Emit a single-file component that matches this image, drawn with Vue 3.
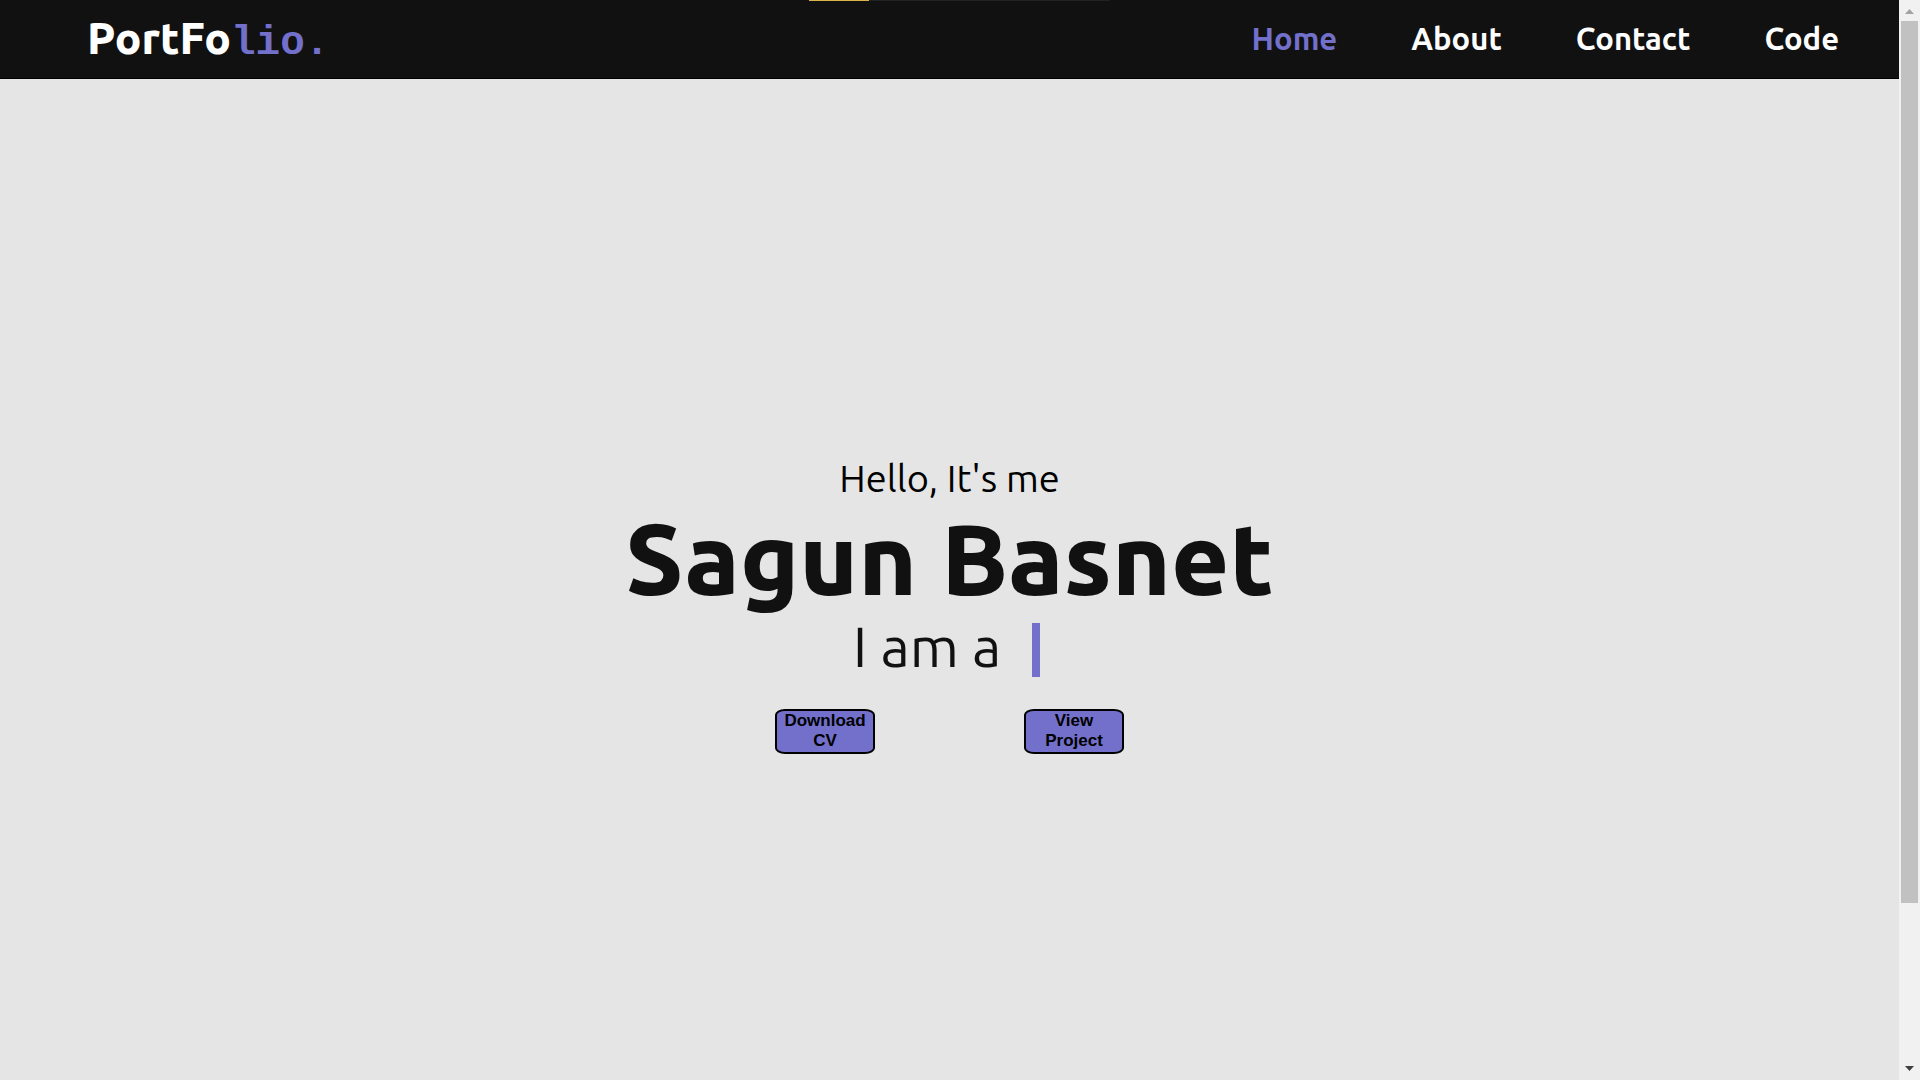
<script setup>
const links = [
  { label: 'Home', href: '#home', active: true },
  { label: 'About', href: '#about' },
  { label: 'Contact', href: '#contact' },
  { label: 'Code', href: '#code' },
]
const actions = ['Download CV', 'View Project']
</script>

<template>
  <div class="window">
    <div class="page">
      <header class="header">
        <a class="logo" href="#home">PortFo<span class="logo-accent">lio.</span></a>
        <nav class="nav">
          <a
            v-for="link in links"
            :key="link.label"
            :href="link.href"
            :class="['nav-link', { active: link.active }]"
          >{{ link.label }}</a>
        </nav>
        <div class="progress"><div class="progress-value"></div></div>
      </header>
      <main id="home" class="hero">
        <p class="greeting">Hello, It's me</p>
        <h1 class="name">Sagun Basnet</h1>
        <h2 class="role">I am a<span class="caret"></span></h2>
        <div class="actions">
          <button v-for="action in actions" :key="action" class="action" type="button">{{ action }}</button>
        </div>
      </main>
    </div>
    <div class="scrollbar" aria-hidden="true">
      <svg class="arrow" viewBox="0 0 21 21"><path d="M6 14L10.500 9L15 14Z" fill="#a3a3a3" /></svg>
      <div class="track"><div class="thumb"></div></div>
      <svg class="arrow" viewBox="0 0 21 21"><path d="M6 7L10.500 12L15 7Z" fill="#404040" /></svg>
    </div>
  </div>
</template>

<style>
body {
  margin: 0;
  background: #e5e5e5;
}
</style>

<style scoped>
.window {
  display: flex;
  min-height: 100vh;
  font-family: Ubuntu, "Noto Sans", sans-serif;
}
.page {
  flex: 1;
  display: flex;
  flex-direction: column;
  background: #e5e5e5;
}
.header {
  position: relative;
  display: flex;
  align-items: center;
  justify-content: space-between;
  box-sizing: border-box;
  height: 79px;
  padding: 0 60px 0 87px;
  border-bottom: 1px solid #000;
  background: #111;
}
.logo {
  padding-top: 2px;
  color: #fff;
  font-size: 44px;
  font-weight: 800;
  line-height: 76px;
  text-decoration: none;
}
.logo-accent {
  color: #7270cb;
  font-family: Consolas, "Liberation Mono", monospace;
  font-size: 41px;
  font-weight: 700;
}
.nav {
  display: flex;
  gap: 74px;
}
.nav-link {
  color: #fff;
  font-size: 31px;
  font-weight: 600;
  line-height: 76px;
  text-decoration: none;
}
.nav-link.active {
  color: #7270cb;
}
.progress {
  position: absolute;
  top: 0;
  left: 809px;
  width: 301px;
  height: 1px;
  background: #222;
}
.progress-value {
  width: 20%;
  height: 1px;
  background: #d9b24a;
}
.hero {
  flex: 1;
  display: flex;
  flex-direction: column;
  align-items: center;
  justify-content: center;
  padding-top: 49px;
  color: #111;
}
.greeting {
  margin: 0;
  color: #000;
  font-size: 38px;
  line-height: 48px;
}
.name {
  margin: 8px 0;
  font-size: 100px;
  font-weight: 800;
  line-height: 96px;
}
.role {
  display: flex;
  align-items: center;
  gap: 31px;
  margin: 0;
  font-size: 57px;
  font-weight: 400;
  line-height: 64px;
}
.caret {
  width: 8px;
  height: 54px;
  margin: 8px 6px 0 0;
  background: #7270cb;
}
.actions {
  display: flex;
  gap: 149px;
  margin-top: 31px;
}
.action {
  width: 100px;
  height: 45px;
  padding: 0 0 2px;
  border: 2px solid #000;
  border-radius: 10px / 6px;
  background: #7270cb;
  color: #000;
  font-family: "Liberation Sans", Arial, sans-serif;
  font-size: 17px;
  font-weight: 700;
  line-height: 20px;
}
.scrollbar {
  position: sticky;
  top: 0;
  display: flex;
  flex-direction: column;
  width: 21px;
  height: 100vh;
  background: #f1f1f1;
}
.arrow {
  width: 21px;
  height: 21px;
}
.track {
  flex: 1;
  padding: 0 2px;
}
.thumb {
  height: 85%;
  background: #c1c1c1;
}
</style>
